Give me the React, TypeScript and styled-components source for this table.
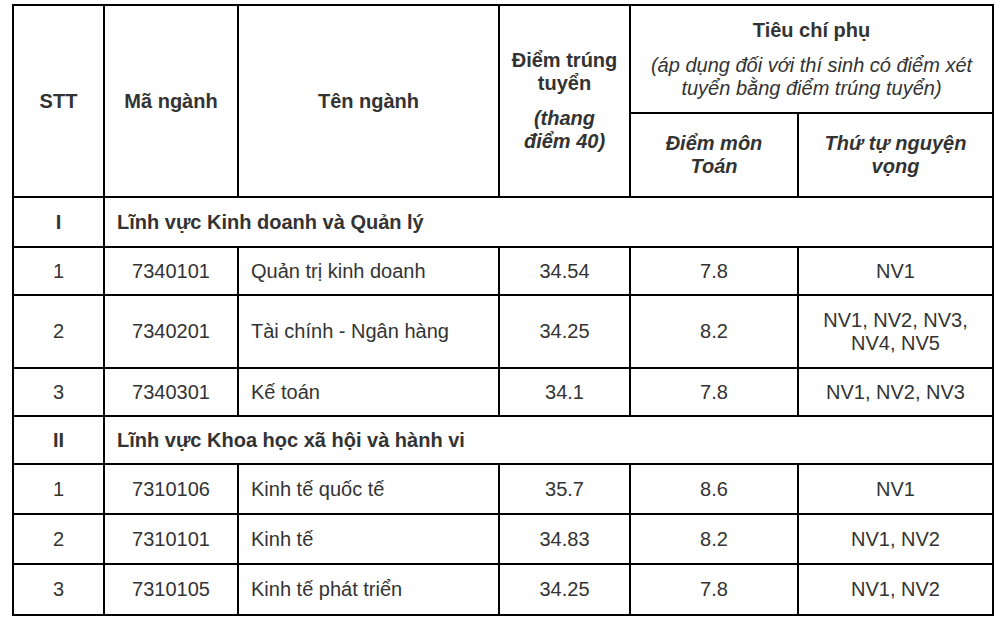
import React from 'react';
import styled, { createGlobalStyle } from 'styled-components';

const Global = createGlobalStyle`
  html, body { margin: 0; padding: 0; background: #fff; }
  body { font-family: "Liberation Sans", Arial, sans-serif; }
`;

const Wrapper = styled.div`
  padding: 4px 0 0 12px;
`;

const Table = styled.table`
  border-collapse: collapse;
  table-layout: fixed;
  width: 982px;
  color: #333;
  font-size: 20px;
  line-height: 23px;
`;

const Row = styled.tr<{ $h: number }>`
  height: ${(p) => p.$h}px;
`;

const Th = styled.th<{ $italic?: boolean; $tight?: boolean }>`
  border: 2px solid #000;
  padding: 0 ${(p) => (p.$tight ? 8 : 12)}px;
  vertical-align: middle;
  text-align: center;
  font-weight: bold;
  font-style: ${(p) => (p.$italic ? 'italic' : 'normal')};
`;

const Td = styled.td<{ $align?: 'left' | 'center'; $bold?: boolean }>`
  border: 2px solid #000;
  padding: 0 12px;
  vertical-align: middle;
  text-align: ${(p) => p.$align ?? 'center'};
  font-weight: ${(p) => (p.$bold ? 'bold' : 'normal')};
`;

const Para = styled.p<{ $italic?: boolean; $bold?: boolean }>`
  margin: 0;
  font-style: ${(p) => (p.$italic ? 'italic' : 'normal')};
  font-weight: ${(p) => (p.$bold ? 'bold' : 'normal')};
  & + & {
    margin-top: 12px;
  }
`;

type DataRow = {
  stt: string;
  code: string;
  name: string;
  score: string;
  math: string;
  nv: React.ReactNode;
  h: number;
};

type Section = {
  roman: string;
  title: string;
  h: number;
  rows: DataRow[];
};

const sections: Section[] = [
  {
    roman: 'I',
    title: 'Lĩnh vực Kinh doanh và Quản lý',
    h: 50,
    rows: [
      { stt: '1', code: '7340101', name: 'Quản trị kinh doanh', score: '34.54', math: '7.8', nv: 'NV1', h: 48 },
      {
        stt: '2',
        code: '7340201',
        name: 'Tài chính - Ngân hàng',
        score: '34.25',
        math: '8.2',
        nv: (
          <>
            NV1, NV2, NV3,
            <br />
            NV4, NV5
          </>
        ),
        h: 73,
      },
      { stt: '3', code: '7340301', name: 'Kế toán', score: '34.1', math: '7.8', nv: 'NV1, NV2, NV3', h: 48 },
    ],
  },
  {
    roman: 'II',
    title: 'Lĩnh vực Khoa học xã hội và hành vi',
    h: 48,
    rows: [
      { stt: '1', code: '7310106', name: 'Kinh tế quốc tế', score: '35.7', math: '8.6', nv: 'NV1', h: 50 },
      { stt: '2', code: '7310101', name: 'Kinh tế', score: '34.83', math: '8.2', nv: 'NV1, NV2', h: 50 },
      { stt: '3', code: '7310105', name: 'Kinh tế phát triển', score: '34.25', math: '7.8', nv: 'NV1, NV2', h: 51 },
    ],
  },
];

const widths = [91, 134, 261, 131, 168, 195];

export default function App() {
  return (
    <>
      <Global />
      <Wrapper>
        <Table>
          <colgroup>
            {widths.map((w, i) => (
              <col key={i} style={{ width: w }} />
            ))}
          </colgroup>
          <thead>
            <Row $h={108}>
              <Th rowSpan={2}>STT</Th>
              <Th rowSpan={2}>Mã ngành</Th>
              <Th rowSpan={2}>Tên ngành</Th>
              <Th rowSpan={2} $tight>
                <Para $bold>Điểm trúng tuyển</Para>
                <Para $bold $italic>(thang điểm 40)</Para>
              </Th>
              <Th colSpan={2}>
                <Para $bold>Tiêu chí phụ</Para>
                <Para $italic>(áp dụng đối với thí sinh có điểm xét tuyển bằng điểm trúng tuyển)</Para>
              </Th>
            </Row>
            <Row $h={84}>
              <Th $italic>Điểm môn Toán</Th>
              <Th $italic>Thứ tự nguyện vọng</Th>
            </Row>
          </thead>
          <tbody>
            {sections.map((s) => (
              <React.Fragment key={s.roman}>
                <Row $h={s.h}>
                  <Td $bold>{s.roman}</Td>
                  <Td $bold $align="left" colSpan={5}>
                    {s.title}
                  </Td>
                </Row>
                {s.rows.map((r) => (
                  <Row $h={r.h} key={s.roman + r.stt}>
                    <Td>{r.stt}</Td>
                    <Td>{r.code}</Td>
                    <Td $align="left">{r.name}</Td>
                    <Td>{r.score}</Td>
                    <Td>{r.math}</Td>
                    <Td>{r.nv}</Td>
                  </Row>
                ))}
              </React.Fragment>
            ))}
          </tbody>
        </Table>
      </Wrapper>
    </>
  );
}
